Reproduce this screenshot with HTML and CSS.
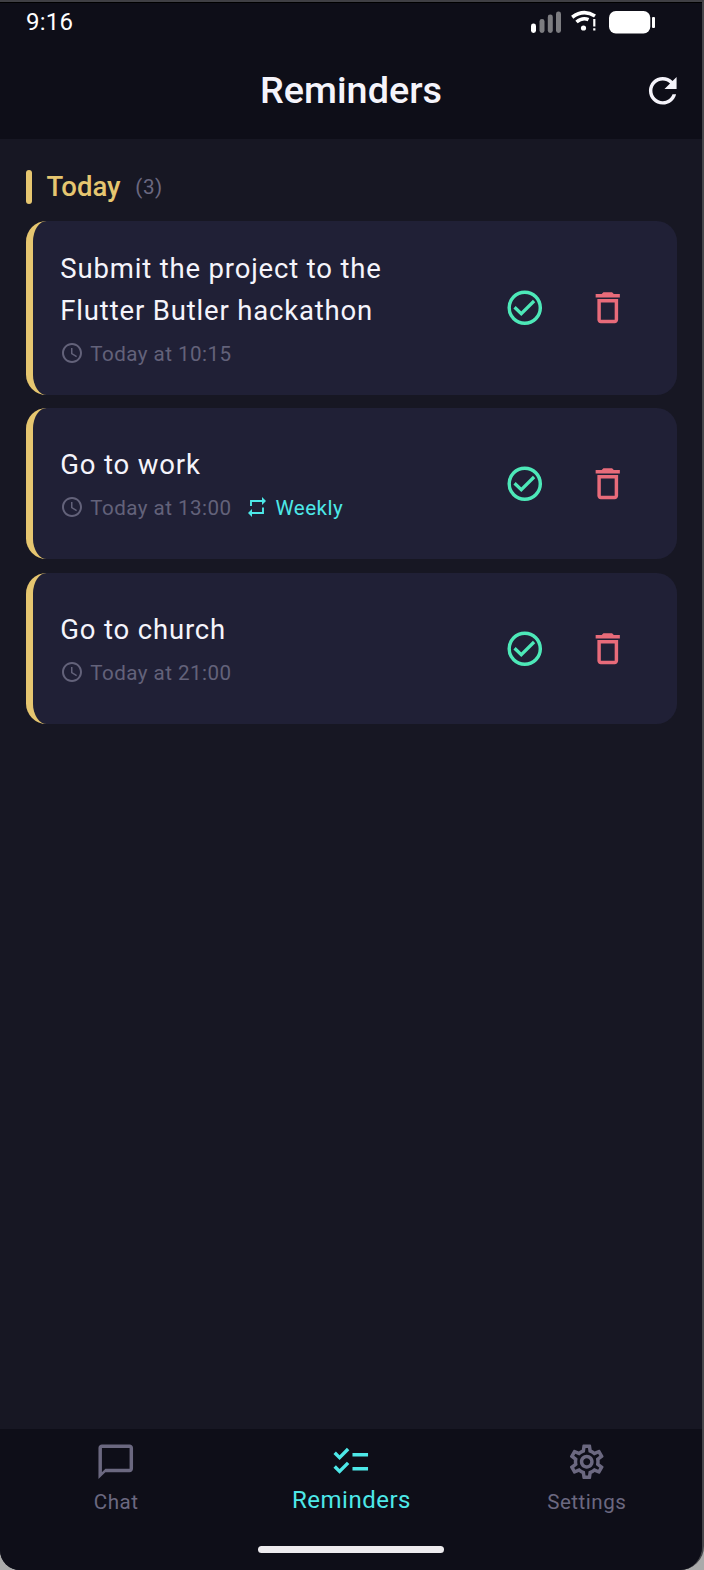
FILE: index.html
```html
<!DOCTYPE html>
<html lang="en">
<head>
<meta charset="utf-8">
<title>Reminders</title>
<link rel="stylesheet" href="styles.css">
</head>
<body>
<svg class="sprite" aria-hidden="true">
  <symbol id="check" viewBox="0 0 24 24"><g fill="none" stroke="currentColor"><circle cx="12" cy="12" r="9" stroke-width="2"/><path d="M6.100 11.700L10 15.400L17.400 8.100" stroke-width="1.900"/></g></symbol>
  <symbol id="trash" viewBox="0 0 24 24"><path d="M6 19c0 1.100.9 2 2 2h8c1.100 0 2-.9 2-2V7H6v12zM8 9h8v10H8V9zm7.500-5l-1-1h-5l-1 1H5v2h14V4h-3.500z"/></symbol>
  <symbol id="clock" viewBox="0 0 24 24"><path d="M11.990 2C6.470 2 2 6.480 2 12s4.470 10 9.990 10C17.520 22 22 17.520 22 12S17.520 2 11.990 2zM12 20c-4.420 0-8-3.580-8-8s3.580-8 8-8 8 3.580 8 8-3.580 8-8 8zm.5-13H11v6l5.250 3.150.75-1.230-4.500-2.670z"/></symbol>
  <symbol id="repeat" viewBox="0 0 24 24"><path d="M6 11V6h12M18 12.500V18H6" fill="none" stroke="currentColor" stroke-width="1.900"/><path d="M17 2l4 4-4 4zM7 14l-4 4 4 4z"/></symbol>
</svg>
<div class="phone">
  <header class="top">
    <div class="status">
      <span class="time">9:16</span>
      <svg class="status-icons" viewBox="0 0 126 24">
        <g fill="#7c7c80"><rect x="8.500" y="9" width="5" height="14" rx="2.400"/><rect x="16.800" y="4.500" width="5" height="18.500" rx="2.400"/><rect x="25" y="1.500" width="5" height="21.500" rx="2.400"/></g>
        <rect x="0" y="13.500" width="5" height="9.500" rx="2.400" fill="#fff"/>
        <g fill="none" stroke="#fff" stroke-width="3.600"><path d="M41.200 7.300Q52.500-1.200 64 6"/><path d="M45.500 12Q51.500 6.900 57.500 9.700"/></g>
        <circle cx="52.500" cy="18" r="2.600" fill="#fff"/>
        <path d="M62.200 9h2.200v7.500h-2.200zM62.200 18.200h2.200v2.400h-2.200z" fill="#fff"/>
        <rect x="78" y="1" width="41.300" height="22.500" rx="6.800" fill="#fff"/>
        <rect x="121" y="7" width="3" height="11" rx="1" fill="#fff"/>
      </svg>
    </div>
    <div class="appbar">
      <h1 class="title">Reminders</h1>
      <svg class="icon refresh" viewBox="0 0 24 24"><path d="M17.650 6.350C16.200 4.900 14.210 4 12 4c-4.420 0-7.990 3.580-7.990 8s3.570 8 7.990 8c3.730 0 6.840-2.550 7.730-6h-2.080c-.82 2.330-3.040 4-5.650 4-3.310 0-6-2.690-6-6s2.690-6 6-6c1.660 0 3.140.69 4.220 1.780L13 11h7V4l-2.350 2.350z"/></svg>
    </div>
  </header>
  <main class="content">
    <div class="section">
      <span class="bar"></span><h2 class="day">Today</h2><span class="count">(3)</span>
    </div>
    <article class="card tall">
      <div class="body">
        <h3 class="name">Submit the project to the Flutter Butler hackathon</h3>
        <div class="meta"><svg class="mini"><use href="#clock"/></svg><span>Today at 10:15</span></div>
      </div>
      <span class="action"><svg class="icon check"><use href="#check"/></svg></span>
      <span class="action"><svg class="icon trash"><use href="#trash"/></svg></span>
    </article>
    <article class="card">
      <div class="body">
        <h3 class="name">Go to work</h3>
        <div class="meta"><svg class="mini"><use href="#clock"/></svg><span>Today at 13:00</span><span class="repeat"><svg class="mini"><use href="#repeat"/></svg><span>Weekly</span></span></div>
      </div>
      <span class="action"><svg class="icon check"><use href="#check"/></svg></span>
      <span class="action"><svg class="icon trash"><use href="#trash"/></svg></span>
    </article>
    <article class="card">
      <div class="body">
        <h3 class="name">Go to church</h3>
        <div class="meta"><svg class="mini"><use href="#clock"/></svg><span>Today at 21:00</span></div>
      </div>
      <span class="action"><svg class="icon check"><use href="#check"/></svg></span>
      <span class="action"><svg class="icon trash"><use href="#trash"/></svg></span>
    </article>
  </main>
  <footer class="bottom">
    <nav class="nav">
      <div class="tab"><svg class="icon" viewBox="0 0 24 24"><path d="M20 2H4c-1.100 0-2 .9-2 2v18l4-4h14c1.100 0 2-.9 2-2V4c0-1.100-.9-2-2-2zm0 14H6l-2 2V4h16v12z"/></svg><span>Chat</span></div>
      <div class="tab active"><svg class="icon" viewBox="0 0 24 24"><path d="M22 7h-9v2h9V7zm0 8h-9v2h9v-2zM5.540 11L2 7.460l1.410-1.410 2.120 2.120 4.240-4.240 1.410 1.410L5.540 11zm0 8L2 15.460l1.410-1.410 2.120 2.120 4.240-4.240 1.410 1.410L5.540 19z"/></svg><span>Reminders</span></div>
      <div class="tab"><svg class="icon" viewBox="0 0 24 24"><path d="M19.430 12.980c.04-.32.07-.64.07-.98s-.03-.66-.07-.98l2.110-1.650c.19-.15.24-.42.12-.64l-2-3.460c-.12-.22-.39-.3-.61-.22l-2.490 1c-.52-.4-1.080-.73-1.690-.98l-.38-2.650C14.460 2.180 14.250 2 14 2h-4c-.25 0-.46.18-.49.42l-.38 2.650c-.61.25-1.170.59-1.690.98l-2.490-1c-.23-.09-.49 0-.61.22l-2 3.460c-.13.22-.07.49.12.64l2.110 1.650c-.04.32-.07.65-.07.98s.03.66.07.98l-2.110 1.650c-.19.15-.24.42-.12.64l2 3.460c.12.22.39.3.61.22l2.490-1c.52.4 1.080.73 1.690.98l.38 2.650c.03.24.24.42.49.42h4c.25 0 .46-.18.49-.42l.38-2.650c.61-.25 1.170-.59 1.690-.98l2.490 1c.23.09.49 0 .61-.22l2-3.460c.12-.22.07-.49-.12-.64l-2.110-1.650zm-1.980-1.710c.04.31.05.52.05.73s-.02.43-.05.73l-.14 1.130.89.7 1.080.84-.7 1.210-1.270-.51-1.040-.42-.9.68c-.43.32-.84.56-1.250.73l-1.060.43-.16 1.130-.2 1.350h-1.400l-.35-2.480-1.060-.43c-.43-.18-.83-.41-1.230-.71l-.91-.7-1.060.43-1.270.51-.7-1.210 1.080-.84.89-.7-.14-1.130c-.03-.31-.05-.54-.05-.74s.02-.43.05-.73l.14-1.130-.89-.7-1.080-.84.7-1.210 1.270.51 1.040.42.9-.68c.43-.32.84-.56 1.250-.73l1.060-.43.16-1.130.2-1.350h1.390l.35 2.480 1.060.43c.43.18.83.41 1.230.71l.91.7 1.060-.43 1.270-.51.7 1.210-1.070.85-.89.7.14 1.130zM12 8c-2.210 0-4 1.790-4 4s1.790 4 4 4 4-1.790 4-4-1.790-4-4-4zm0 6c-1.100 0-2-.9-2-2s.9-2 2-2 2 .9 2 2-.9 2-2 2z"/></svg><span>Settings</span></div>
    </nav>
    <div class="home"></div>
  </footer>
</div>
</body>
</html>
```
FILE: styles.css
```css
* { box-sizing: border-box; }
body { margin: 0; background: #aaa; font-family: Roboto, sans-serif; }
h1, h2, h3 { margin: 0; font-weight: 400; }
svg { display: block; fill: currentColor; flex: none; }
.sprite { display: none; }
.phone {
  width: 704px; height: 1570px; overflow: hidden;
  display: flex; flex-direction: column;
  background: #171723;
  border-top: 2px solid #3f3f44; border-right: 2px solid #46464a;
  border-radius: 0 0 24px 20px;
}
.top { height: 137px; background: #0e0e18; border-top: 1px solid #000; color: #f5f4fb; }
.status { height: 38px; padding: 0 48px 0 26px; display: flex; align-items: center; justify-content: space-between; }
.time { font-size: 24px; letter-spacing: .2px; color: #fff; }
.status-icons { width: 126px; height: 24px; margin-right: -3px; }
.appbar { height: 98px; display: grid; grid-template-columns: 1fr auto 1fr; align-items: center; padding: 0 19px 0 19px; }
.title { grid-column: 2; font-size: 37.800px; font-weight: 500; line-height: 48px; }
.icon { width: 41.500px; height: 41.500px; }
.refresh { justify-self: end; margin-top: 2px; }
.content { flex: 1; padding: 30.700px 25.300px 0 25.500px; }
.section { display: flex; align-items: center; height: 34.500px; margin-bottom: 17px; }
.bar { width: 6.900px; height: 34.500px; border-radius: 3.400px; background: #e6c670; }
.day { margin-left: 14px; font-size: 27.500px; font-weight: 500; color: #e6c670; }
.count { margin-left: 14.800px; font-size: 20.600px; letter-spacing: .6px; color: #6b6880; }
.card {
  display: flex; align-items: center; height: 151px; margin-bottom: 13.700px;
  padding: 0 27.900px 0 27.800px; background: #202036;
  border-left: 7px solid #e6c670; border-radius: 20.600px;
}
.tall { height: 173.500px; }
.body { flex: 1; padding-bottom: 2px; }
.tall .body { padding-bottom: 0; }
.name { width: 370px; font-size: 27.500px; line-height: 41.200px; letter-spacing: .83px; color: #f5f4fb; }
.meta { display: flex; align-items: center; gap: 6.500px; height: 27.500px; margin-top: 9px; font-size: 20.600px; letter-spacing: .46px; color: #63627a; }
.mini { width: 24px; height: 24px; margin-left: -.5px; margin-top: -1px; }
.repeat { display: flex; align-items: center; gap: 6.900px; margin-left: 6.900px; color: #4de8e8; }
.action { width: 82.400px; display: flex; justify-content: center; }
.check { color: #4de8b8; }
.trash { color: #e86b7a; }
.bottom { height: 141px; background: #0e0e18; }
.nav { display: flex; height: 117px; margin: 0 -2px; padding-top: 12px; }
.tab { flex: 1; display: flex; flex-direction: column; align-items: center; font-size: 20.600px; line-height: 28px; letter-spacing: .5px; color: #6b6880; }
.tab span { margin-top: 5.500px; padding-left: 1px; }
.active { font-size: 24px; color: #4de8e8; }
.active span { margin-top: 3px; }
.home { width: 186px; height: 7px; margin: 0 auto; border-radius: 4px; background: #edebee; }
```
